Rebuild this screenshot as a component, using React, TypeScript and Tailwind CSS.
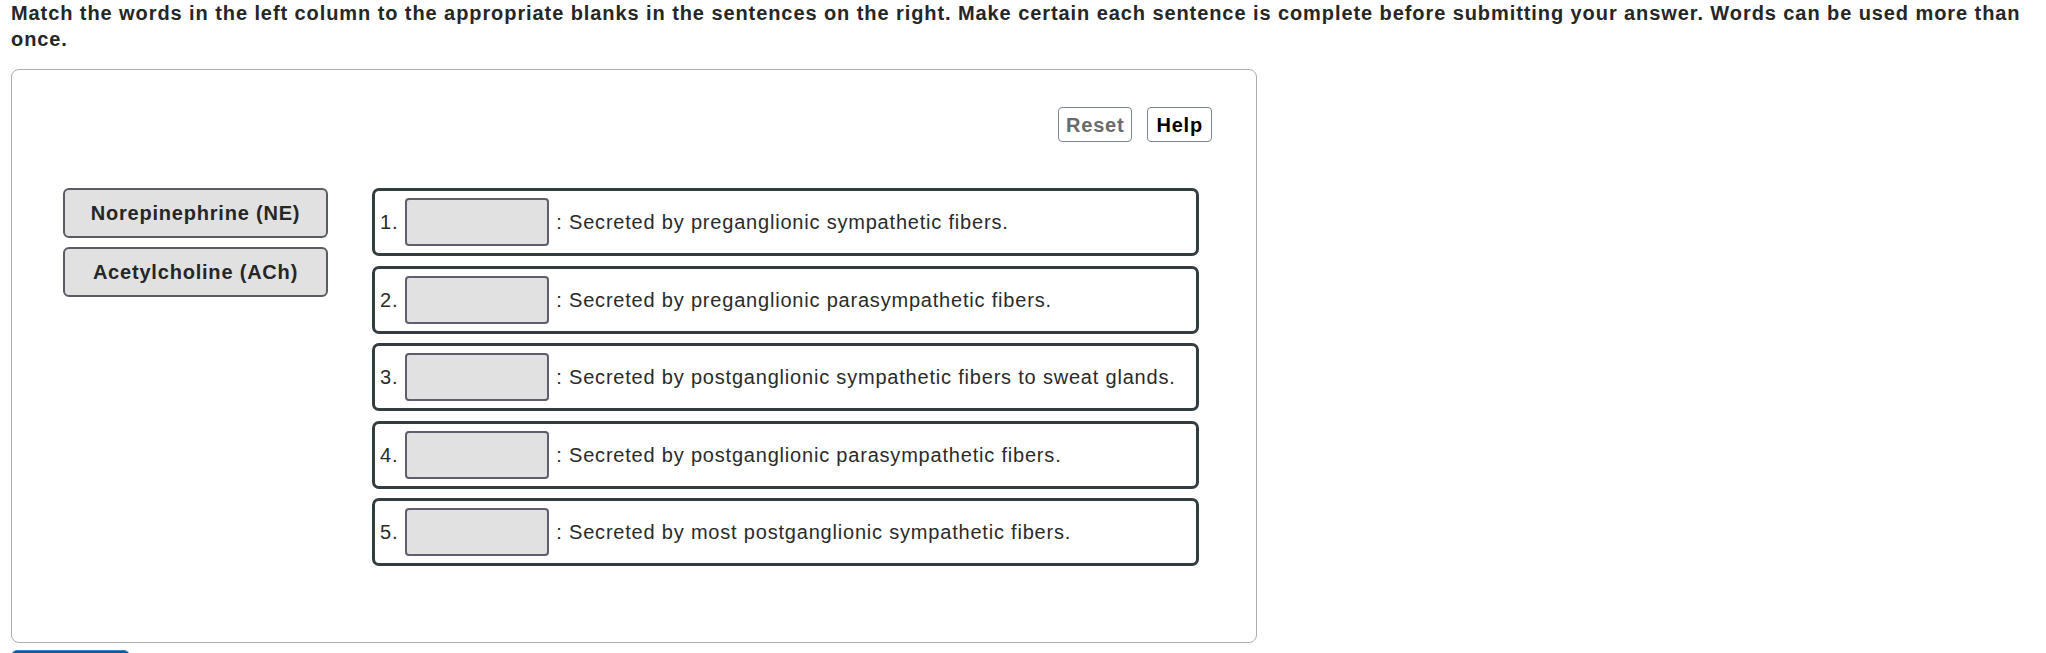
const WORDS = ['Norepinephrine (NE)', 'Acetylcholine (ACh)'];

const SENTENCES = [
  'Secreted by preganglionic sympathetic fibers.',
  'Secreted by preganglionic parasympathetic fibers.',
  'Secreted by postganglionic sympathetic fibers to sweat glands.',
  'Secreted by postganglionic parasympathetic fibers.',
  'Secreted by most postganglionic sympathetic fibers.',
];

export default function App() {
  return (
    <div className="min-h-screen bg-white px-[11px] font-['Liberation_Sans',Arial,sans-serif] tracking-[0.8px] text-[#2a2a2a]">
      <p className="text-[20px] font-bold leading-[26px] tracking-[0.92px] text-[#262626]">
        Match the words in the left column to the appropriate blanks in the sentences on the right. Make certain each
        sentence is complete before submitting your answer. Words can be used more than once.
      </p>

      <div className="mt-[17px] w-[1246px] rounded-lg border border-[#ababab] pt-[37px] pb-[76px]">
        {/* toolbar */}
        <div className="flex justify-end gap-[15px] pr-[44px]">
          <button className="h-[35px] rounded-[4px] border border-[#7d868c] bg-white px-[7px] text-[20px] font-bold leading-none text-[#6a6a6a]">
            Reset
          </button>
          <button className="h-[35px] rounded-[4px] border border-[#7d868c] bg-white px-[8px] text-[20px] font-bold leading-none text-black">
            Help
          </button>
        </div>

        <div className="mt-[46px] flex gap-[44px] pl-[51px]">
          {/* word bank */}
          <div className="flex w-[265px] flex-col gap-[9px]">
            {WORDS.map((w) => (
              <div
                key={w}
                className="flex h-[50px] items-center justify-center rounded-md border-2 border-[#595d63] bg-[#e1e1e1] text-[20px] font-bold text-[#262626]"
              >
                {w}
              </div>
            ))}
          </div>

          {/* sentences */}
          <div className="flex w-[827px] flex-col gap-[9.5px]">
            {SENTENCES.map((s, i) => (
              <div
                key={s}
                className="flex h-[68px] items-center rounded-[7px] border-[3px] border-[#323c41] pl-[5px] text-[20px]"
              >
                <span className="mr-[7px]">{i + 1}.</span>
                <div className="h-[48px] w-[144px] rounded-[4px] border-2 border-[#5d606c] bg-[#e1e1e1]" />
                <span className="ml-[7px]">: {s}</span>
              </div>
            ))}
          </div>
        </div>
      </div>

      <button
        aria-label="Submit"
        className="mt-[7px] h-10 w-[119px] rounded-t-md border border-[#3d7fc0] bg-[#0b5aa2]"
      />
    </div>
  );
}
